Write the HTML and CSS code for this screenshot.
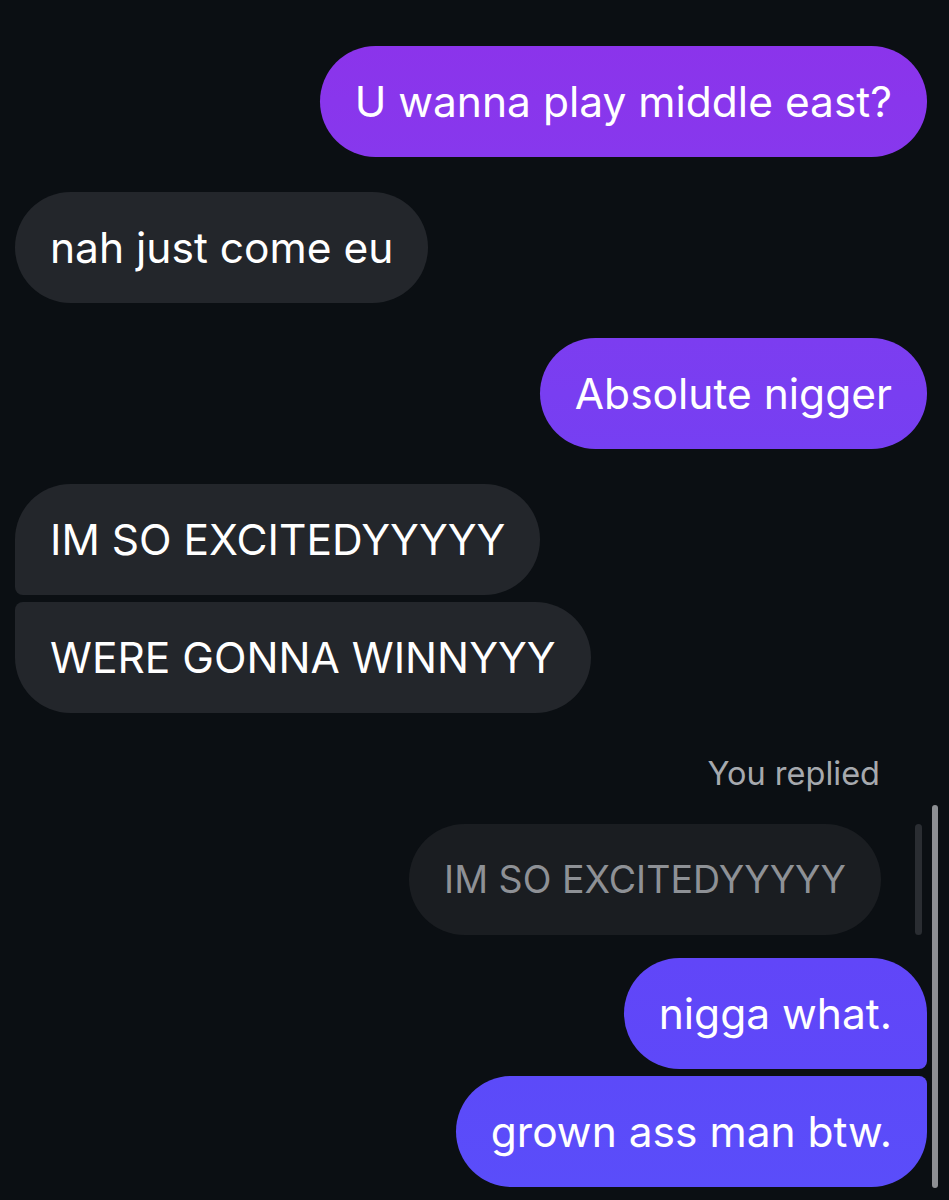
FILE: index.html
```html
<!DOCTYPE html>
<html>
<head>
  <title>Chat</title>
  <link rel="stylesheet" href="styles.css">
</head>
<body>
  <div class="chat">
    <div class="bubble out b1">U wanna play middle east?</div>
    <div class="bubble in group">nah just come eu</div>
    <div class="bubble out b2 group">Absolute nigger</div>
    <div class="bubble in first group">IM SO EXCITEDYYYYY</div>
    <div class="bubble in last">WERE GONNA WINNYYY</div>

    <div class="reply-label">You replied</div>
    <div class="reply-row">
      <div class="bubble quote">IM SO EXCITEDYYYYY</div>
      <div class="reply-bar"></div>
    </div>
    <div class="bubble out b3 first">nigga what.</div>
    <div class="bubble out b4 last">grown ass man btw.</div>
  </div>
  <div class="scroll-thumb"></div>
</body>
</html>
```

FILE: styles.css
```css
html, body {
  background-color: #0b0f13;
}

body {
  margin: 0;
  padding: 0;
  font-family: Inter, "Noto Sans", sans-serif;
  color: #fff;
  height: 1200px;
  overflow: hidden;
}

.chat {
  display: flex;
  flex-direction: column;
  padding: 46px 22px 0 15px;
}

.bubble {
  box-sizing: border-box;
  height: 111px;
  padding: 0 35px;
  border-radius: 56px;
  font-size: 42.5px;
  line-height: 111px;
  white-space: nowrap;
}

.group {
  margin-top: 35px;
}

.in {
  align-self: flex-start;
  background-color: #23262b;
}

.out {
  align-self: flex-end;
}

.in.first {
  border-bottom-left-radius: 8px;
}

.in.last {
  margin-top: 7px;
  border-top-left-radius: 8px;
}

.out.first {
  border-bottom-right-radius: 8px;
}

.out.last {
  margin-top: 7px;
  border-top-right-radius: 8px;
}

.b1 {
  background: linear-gradient(#8b34eb, #8738ed);
}

.b2 {
  background: linear-gradient(#7c3df0, #763ff2);
}

.b3 {
  margin-top: 23px;
  background: linear-gradient(#6146f8, #5e48f9);
}

.b4 {
  background: linear-gradient(#5c4af9, #5a4dfa);
}

.reply-label {
  align-self: flex-end;
  margin: 43px 47px 0 0;
  font-size: 32.5px;
  line-height: 36px;
  color: #a6a9ae;
}

.reply-row {
  align-self: flex-end;
  display: flex;
  align-items: stretch;
  gap: 34px;
  margin: 32px 5px 0 0;
}

.quote {
  font-size: 37.5px;
  background-color: #1a1d21;
  color: #8e9196;
}

.reply-bar {
  width: 7px;
  border-radius: 4px;
  background-color: #2a2d32;
}

.scroll-thumb {
  position: absolute;
  top: 805px;
  left: 932px;
  width: 6px;
  height: 383px;
  border-radius: 3px;
  background-color: #8d8f93;
}
```
